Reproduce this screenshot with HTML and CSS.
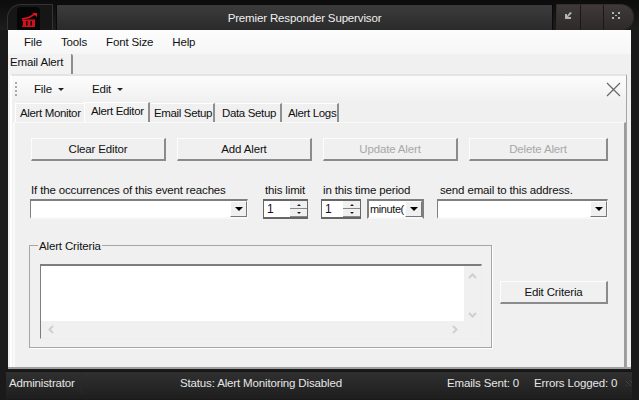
FILE: index.html
```html
<!DOCTYPE html>
<html lang="en">
<head>
<meta charset="utf-8">
<title>Premier Responder Supervisor</title>
<link rel="stylesheet" href="styles.css">
</head>
<body>
<div class="window">
  <header class="titlebar">
    <div class="logo">
      <div class="logo-inner">
        <svg class="logo-icon" width="16" height="14" viewBox="0 0 16 14">
          <path d="M1 6 L8 4.500 L14 1" fill="none" stroke="#e0121c" stroke-width="1.6"/>
          <path d="M11 0h5v4z" fill="#e0121c"/>
          <path d="M1 6.500h13V8H1zM2 8h3v5H2zM6.500 8h3v5h-3zM11 8h3v5h-3zM1 12.500h13V14H1z" fill="#d0101a"/>
        </svg>
      </div>
    </div>
    <div class="title">Premier Responder Supervisor</div>
    <div class="controls">
      <div class="ctl">
        <svg width="7" height="7" viewBox="0 0 7 7"><path d="M0 2h2v2l3-4 2 1-4 4h3v2H0z" fill="#b5b5b5"/></svg>
      </div>
      <div class="ctl ctl-mid"></div>
      <div class="ctl ctl-last">
        <svg width="8" height="7" viewBox="0 0 8 7"><path d="M0 0h2v2H0zM6 0h2v2H6zM0 5h2v2H0zM6 5h2v2H6zM3 3h2v1H3z" fill="#b5b5b5"/></svg>
      </div>
    </div>
  </header>

  <main class="client">
    <nav class="menubar">
      <span class="menu-item">File</span>
      <span class="menu-item">Tools</span>
      <span class="menu-item">Font Size</span>
      <span class="menu-item">Help</span>
    </nav>
    <div class="doc-tabs"><span class="doc-tab">Email Alert</span></div>

    <section class="doc">
      <div class="toolbar">
        <span class="grip"></span>
        <span class="tool tool-file">File <i class="caret"></i></span>
        <span class="tool tool-edit">Edit <i class="caret"></i></span>
        <svg class="close" width="15" height="15" viewBox="0 0 15 15"><path d="M1 1l13 13M14 1L1 14" stroke="#666" stroke-width="1.2" fill="none"/></svg>
      </div>
      <div class="tabs">
        <span class="tab tab-monitor">Alert Monitor</span>
        <span class="tab tab-active">Alert Editor</span>
        <span class="tab tab-email">Email Setup</span>
        <span class="tab tab-data">Data Setup</span>
        <span class="tab tab-logs">Alert Logs</span>
      </div>

      <div class="panel">
        <div class="buttons">
          <button class="btn w135">Clear Editor</button>
          <button class="btn w135">Add Alert</button>
          <button class="btn w135 disabled">Update Alert</button>
          <button class="btn w139 disabled">Delete Alert</button>
        </div>

        <div class="fields">
          <div class="field f-event">
            <label>If the occurrences of this event reaches</label>
            <div class="combo"><span class="combo-text"></span><span class="arrow-btn"><i class="arrow"></i></span></div>
          </div>
          <div class="field f-limit">
            <label>this limit</label>
            <div class="spin"><span class="spin-text">1</span><span class="spin-btns"><span class="sb"><i class="up"></i></span><span class="sb"><i class="down"></i></span></span></div>
          </div>
          <div class="field f-period">
            <label>in this time period</label>
            <div class="period-row">
              <div class="spin spin-short"><span class="spin-text">1</span><span class="spin-btns"><span class="sb"><i class="up"></i></span><span class="sb"><i class="down"></i></span></span></div>
              <div class="combo combo-period"><span class="combo-text">minute(</span><span class="arrow-btn"><i class="arrow"></i></span></div>
            </div>
          </div>
          <div class="field f-mail">
            <label>send email to this address.</label>
            <div class="combo"><span class="combo-text"></span><span class="arrow-btn"><i class="arrow"></i></span></div>
          </div>
        </div>

        <div class="criteria-row">
          <fieldset class="group">
            <legend>Alert Criteria</legend>
            <div class="textarea">
              <div class="text-body"></div>
              <div class="vscroll">
                <svg width="9" height="6" viewBox="0 0 9 6"><path d="M1 5l3.500-3.500L8 5" fill="none" stroke="#cfcfcf" stroke-width="2"/></svg>
                <svg width="9" height="6" viewBox="0 0 9 6"><path d="M1 1l3.500 3.500L8 1" fill="none" stroke="#cfcfcf" stroke-width="2"/></svg>
              </div>
              <div class="hscroll">
                <svg width="6" height="9" viewBox="0 0 6 9"><path d="M5 1L1.500 4.500 5 8" fill="none" stroke="#cfcfcf" stroke-width="2"/></svg>
                <svg width="6" height="9" viewBox="0 0 6 9"><path d="M1 1l3.500 3.500L1 8" fill="none" stroke="#cfcfcf" stroke-width="2"/></svg>
              </div>
            </div>
          </fieldset>
          <button class="btn edit-btn">Edit Criteria</button>
        </div>
      </div>
    </section>
  </main>

  <footer class="statusbar">
    <span class="st st-user">Administrator</span>
    <span class="st st-status">Status: Alert Monitoring Disabled</span>
    <span class="st st-sent">Emails Sent: 0</span>
    <span class="st st-err">Errors Logged: 0</span>
    <span class="resize"></span>
  </footer>
</div>
</body>
</html>
```
FILE: styles.css
```css
* { box-sizing: border-box; }
html, body { margin: 0; padding: 0; }
body { width: 639px; height: 400px; overflow: hidden; background: #1b1b1b; font: 11.5px "Liberation Sans", Arial, sans-serif; letter-spacing: -.15px; color: #111; }
.window { width: 639px; height: 400px; display: flex; flex-direction: column; background: #1a1a1a; }

/* title bar */
.titlebar { height: 30px; flex: none; display: flex; padding: 4px 5px 0 7px; gap: 3px; background: linear-gradient(#0c0c0c, #1c1c1c); }
.logo { width: 46px; height: 26px; border: 1px solid #333; border-bottom: 0; border-radius: 14px 0 0 0; background: #161616; padding: 2px 0 0 9px; }
.logo-inner { width: 23px; height: 24px; background: #060606; border-radius: 4px 4px 0 0; padding: 6px 0 0 4px; }
.logo-icon { display: block; }
.title { flex: 1; height: 26px; border: 1px solid #0a0a0a; border-bottom: 0; background: linear-gradient(#3c3c3c, #2a2a2a); color: #f0f0f0; text-align: center; line-height: 26px; }
.controls { width: 78px; height: 26px; display: flex; border: 1px solid #392a2a; border-bottom: 0; border-radius: 0 14px 14px 0; background: linear-gradient(#3e3a3a, #2e2a2a); overflow: hidden; }
.ctl { flex: 1; display: flex; align-items: center; justify-content: center; border-right: 1px solid #241414; padding-bottom: 4px; }
.ctl-last { border-right: 0; padding-right: 6px; }

/* client area */
.client { flex: none; height: 339px; margin: 0 8px; width: 623px; background: #f0f0f0; display: flex; flex-direction: column; border-bottom: 2px solid #a0a0a0; }
.menubar { height: 24px; flex: none; background: linear-gradient(#fdfdfd, #f6f6f6); display: flex; align-items: center; padding-left: 16px; gap: 19px; }
.doc-tabs { height: 20px; flex: none; padding-left: 1px; background: #f0f0f0; }
.doc-tab { display: inline-block; height: 21px; width: 64px; padding: 1px 0 0 1px; line-height: 15px; background: #f2f2f2; border-right: 2px solid #8d8d8d; border-radius: 0 2px 0 0; white-space: nowrap; }

.doc { flex: 1; margin: 0 4px 0 2px; display: flex; flex-direction: column; border-top: 2px solid #e4e4e4; border-left: 2px solid #fff; border-right: 1px solid #a5a5a5; min-height: 0; }
.toolbar { height: 26px; flex: none; display: flex; align-items: center; background: linear-gradient(#fcfcfc, #f0f0f0); position: relative; }
.grip { width: 2px; height: 14px; margin-left: 3px; background: repeating-linear-gradient(#a9a9a9 0 2px, transparent 2px 4px); }
.tool { display: inline-flex; align-items: center; gap: 6px; }
.tool-file { margin-left: 17px; }
.tool-edit { margin-left: 28px; }
.caret { width: 0; height: 0; border: 3px solid transparent; border-top-color: #222; border-bottom: 0; }
.close { margin-left: auto; margin-right: 5px; }

.tabs { height: 20px; flex: none; display: flex; align-items: flex-end; padding-left: 3px; background: #f0f0f0; letter-spacing: -.35px; }
.tab { height: 19px; line-height: 17px; padding-top: 1px; text-align: left; border-right: 2px solid #8f8f8f; border-top: 1px solid #fff; white-space: nowrap; margin-right: 1px; }
.tab-monitor { width: 69px; border-right: 0; margin-right: 0; border-left: 1px solid #fff; padding-left: 4px; }
.tab-active { width: 66px; height: 21px; margin-right: 1px; border-left: 1px solid #fff; padding: 0 0 0 6px; background: #f3f3f3; position: relative; margin-bottom: -1px; }
.tab-email { width: 64px; padding-left: 3px; }
.tab-data { width: 66px; padding-left: 6px; }
.tab-logs { width: 56px; margin-right: 0; padding-left: 5px; }

.panel { flex: 1; margin: 0 0 0 1px; border-top: 1px solid #fafafa; border-left: 2px solid #fafafa; border-right: 2px solid #9c9c9c; background: #f0f0f0; padding: 15px 0 0 16px; position: relative; }
.buttons { display: flex; gap: 11px; }
.btn { height: 23px; padding: 0; font: inherit; letter-spacing: inherit; color: #111; background: #f0f0f0; border: 1px solid; border-color: #fcfcfc #8b8b8b #8b8b8b #fcfcfc; border-width: 1px 2px 2px 1px; }
.w135 { width: 135px; }
.w139 { width: 139px; }
.disabled { color: #a8a8a8; }

.fields { display: flex; margin-top: 22px; margin-left: -1px; }
.field { display: flex; flex-direction: column; }
.field label { height: 16px; line-height: 14px; white-space: nowrap; padding-left: 1px; }
.f-event { width: 218px; }
.f-limit { width: 45px; margin-left: 15px; }
.f-limit label { padding-left: 2px; }
.f-period { margin-left: 13px; width: 103px; }
.f-period label { padding-left: 2px; }
.f-mail { margin-left: 13px; width: 171px; }
.f-mail label { padding-left: 3px; }
.period-row { display: flex; gap: 6px; }

.combo { height: 20px; display: flex; background: #fff; border: 2px solid; border-color: #7f7f7f #f8f8f8 #f8f8f8 #7f7f7f; border-left-width: 1px; border-right-width: 1px; }
.combo-text { flex: 1; min-width: 0; line-height: 17px; padding-left: 2px; white-space: nowrap; }
.combo-period { width: 57px; border-left: 2px solid #7f7f7f; border-right: 2px solid #7f7f7f; }
.combo-period .combo-text { padding-left: 1px; letter-spacing: -.4px; font-size: 11px; }
.arrow-btn { width: 17px; height: 16px; flex: none; background: #f0f0f0; border: 1px solid; border-color: #fff #777 #777 #fff; display: flex; align-items: center; justify-content: center; }
.arrow { width: 0; height: 0; border: 4px solid transparent; border-top-color: #000; border-bottom: 0; }
.spin { height: 20px; width: 45px; display: flex; background: #fff; border: 2px solid #666; border-left-width: 1px; border-right-width: 1px; }
.spin-short { width: 40px; }
.spin-text { flex: 1; line-height: 17px; padding-left: 3px; color: #1c0a2c; font-size: 12px; }
.spin-btns { width: 17px; display: flex; flex-direction: column; }
.sb { flex: 1; background: #f0f0f0; display: flex; align-items: center; justify-content: center; border-bottom: 1px solid #888; }
.up { border: 2px solid transparent; border-bottom-color: #222; border-top: 0; }
.down { border: 2px solid transparent; border-top-color: #222; border-bottom: 0; }

.criteria-row { display: flex; align-items: flex-start; margin-top: 20px; margin-left: -2px; }
.group { width: 462px; height: 103px; margin: 6px 0 0; padding: 0 9px 0 10px; border: 1px solid #a6a6a6; box-shadow: 1px 1px 0 #fff; position: relative; }
.group legend { padding: 0 1px; line-height: 13px; height: 13px; margin-top: -6px; position: absolute; left: 8px; background: #f0f0f0; }
.textarea { width: 442px; height: 75px; margin-top: 18px; display: grid; grid-template-columns: 1fr 17px; grid-template-rows: 1fr 17px; border: 1px solid #eee; border-top: 2px solid #7d7d7d; border-left: 1px solid #7d7d7d; background: #f0f0f0; }
.text-body { background: #fff; }
.vscroll { display: flex; flex-direction: column; align-items: center; justify-content: space-between; padding: 7px 0 20px; grid-row: 1 / 3; grid-column: 2; }
.hscroll { display: flex; align-items: center; justify-content: space-between; padding: 0 6px 0 7px; grid-column: 1; grid-row: 2; }
.edit-btn { width: 108px; margin: 42px 0 0 8px; }

/* status bar */
.statusbar { flex: 1; display: flex; align-items: center; margin: 2px 7px 3px 6px; padding-bottom: 5px; background: linear-gradient(#303030, #1e1e1e); border-top: 1px solid #141414; color: #e6e6e6; position: relative; }
.st { white-space: nowrap; }
.st-user { width: 76px; padding-left: 3px; border-right: 1px solid #2a2a2a; line-height: 22px; }
.st-status { margin-left: 98px; width: 267px; }
.st-sent { width: 87px; }
.st-err { width: 80px; }
.resize { width: 6px; height: 6px; margin-left: auto; background: repeating-linear-gradient(45deg, #444 0 1px, transparent 1px 3px); }
```
